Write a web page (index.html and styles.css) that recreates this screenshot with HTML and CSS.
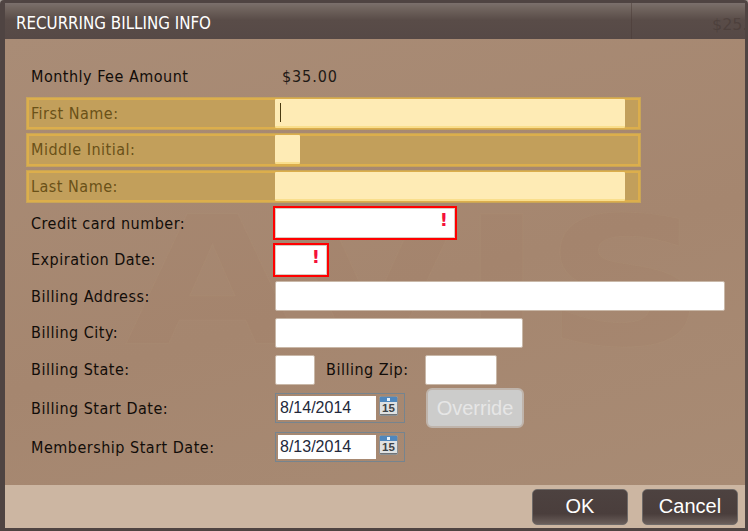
FILE: index.html
```html
<!DOCTYPE html>
<html lang="en">
<head>
<meta charset="utf-8">
<title>Recurring Billing Info</title>
<link rel="stylesheet" href="styles.css">
</head>
<body>
<div class="dialog">
  <header class="titlebar">
    <h1 class="title">RECURRING BILLING INFO</h1>
    <span class="ghost-rule"></span>
    <span class="ghost-price">$25.0</span>
  </header>
  <main class="content">
    <div class="watermark" aria-hidden="true">AVIS</div>
    <form class="form">
      <div class="row">
        <span class="label">Monthly Fee Amount</span>
        <span class="value">$35.00</span>
      </div>
      <div class="row row-warn">
        <label class="label">First Name:</label>
        <input class="input input-warn input-caret w-350" type="text">
      </div>
      <div class="row row-warn">
        <label class="label">Middle Initial:</label>
        <input class="input input-warn w-25" type="text">
      </div>
      <div class="row row-warn">
        <label class="label">Last Name:</label>
        <input class="input input-warn w-350" type="text">
      </div>
      <div class="row">
        <label class="label">Credit card number:</label>
        <span class="error-field w-184">
          <input class="input input-error" type="text">
          <span class="bang">!</span>
        </span>
      </div>
      <div class="row">
        <label class="label">Expiration Date:</label>
        <span class="error-field w-56">
          <input class="input input-error" type="text">
          <span class="bang">!</span>
        </span>
      </div>
      <div class="row">
        <label class="label">Billing Address:</label>
        <input class="input w-450" type="text">
      </div>
      <div class="row">
        <label class="label">Billing City:</label>
        <input class="input w-248" type="text">
      </div>
      <div class="row">
        <label class="label">Billing State:</label>
        <input class="input w-40" type="text">
        <label class="label-inline">Billing Zip:</label>
        <input class="input w-72" type="text">
      </div>
      <div class="row row-date">
        <label class="label">Billing Start Date:</label>
        <span class="datepicker">
          <input class="date-input" type="text" value="8/14/2014">
          <svg class="cal" width="20" height="21" viewBox="0 0 20 21">
            <rect x="0.5" y="0.5" width="18" height="19" rx="1" fill="#dfe1e2" stroke="#8b8f92"/>
            <rect x="1" y="1" width="17" height="5" fill="#4f87bd"/>
            <rect x="8" y="2" width="3" height="3" fill="#e8f2fa"/>
            <line x1="1" y1="18.5" x2="18" y2="18.5" stroke="#6f7377"/>
            <text class="cal-text" x="9.5" y="16">15</text>
          </svg>
        </span>
        <button class="override" type="button">Override</button>
      </div>
      <div class="row row-date">
        <label class="label">Membership Start Date:</label>
        <span class="datepicker">
          <input class="date-input" type="text" value="8/13/2014">
          <svg class="cal" width="20" height="21" viewBox="0 0 20 21">
            <rect x="0.5" y="0.5" width="18" height="19" rx="1" fill="#dfe1e2" stroke="#8b8f92"/>
            <rect x="1" y="1" width="17" height="5" fill="#4f87bd"/>
            <rect x="8" y="2" width="3" height="3" fill="#e8f2fa"/>
            <line x1="1" y1="18.5" x2="18" y2="18.5" stroke="#6f7377"/>
            <text class="cal-text" x="9.5" y="16">15</text>
          </svg>
        </span>
      </div>
    </form>
  </main>
  <footer class="footer">
    <button class="btn" type="button">OK</button>
    <button class="btn" type="button">Cancel</button>
  </footer>
</div>
</body>
</html>
```
FILE: styles.css
```css
* { box-sizing: border-box; }
html, body { margin: 0; padding: 0; background: #a9a29c; }
body { width: 748px; height: 531px; overflow: hidden; }

.dialog {
  width: 748px;
  height: 531px;
  display: flex;
  flex-direction: column;
  border: solid #4f4442;
  border-width: 3px 3px 3px 5px;
  border-radius: 4px 4px 0 0;
  font-family: "DejaVu Sans", sans-serif;
}

.titlebar {
  position: relative;
  height: 36px;
  flex: none;
  display: flex;
  align-items: center;
  padding: 4px 0 0 11px;
  background: linear-gradient(#7b706c 0, #71655f 5px, #594c48 17px, #564946 100%);
}
.title {
  margin: 0;
  font: 400 16.8px "DejaVu Sans Condensed", "DejaVu Sans", sans-serif;
  color: #fff;
}
.ghost-rule {
  position: absolute;
  left: 626px;
  top: 0;
  width: 1px;
  height: 43px;
  background: rgba(70, 56, 50, .45);
}
.ghost-price {
  position: absolute;
  right: 0;
  top: 12px;
  width: 33px;
  overflow: hidden;
  white-space: nowrap;
  font: 16px "DejaVu Sans", sans-serif;
  color: rgba(60, 48, 44, .4);
}

.content {
  position: relative;
  flex: 1;
  overflow: hidden;
  padding: 21px 0 0 21px;
  background: linear-gradient(165deg, #a98c76 0%, #a5866f 55%, #a88b74 100%);
}
.watermark {
  position: absolute;
  left: 120px;
  top: 155px;
  font: 700 178px/1 "DejaVu Sans", sans-serif;
  color: rgba(150, 115, 90, .07);
  -webkit-text-stroke: 1px rgba(185, 155, 130, .14);
  white-space: nowrap;
  transform: scaleX(1.27);
  transform-origin: left top;
}

.form {
  position: relative;
  width: 720px;
  display: flex;
  flex-direction: column;
  gap: 3px;
}

.row {
  height: 33.6px;
  display: flex;
  align-items: center;
  padding-left: 5px;
  flex: none;
}
.row-date { height: 34px; margin-top: 2px; }
.row-warn {
  width: 615px;
  background: #c29f5b;
  box-shadow: inset 0 0 0 1px #c9a557, inset 0 0 0 3px #dcae4c;
}

.label {
  width: 244px;
  flex: none;
  font: 16px "DejaVu Sans Condensed", "DejaVu Sans", sans-serif;
  letter-spacing: .5px;
  color: #120d09;
}
.row-warn .label { color: #6a5118; }
.label-inline {
  margin: 0 16px 0 11px;
  font: 16px "DejaVu Sans Condensed", "DejaVu Sans", sans-serif;
  letter-spacing: .5px;
  color: #120d09;
}
.value {
  margin-left: 7px;
  font: 16px "DejaVu Sans Condensed", "DejaVu Sans", sans-serif;
  letter-spacing: .9px;
  color: #1f1a16;
}

.input {
  display: block;
  height: 30px;
  padding: 0;
  background: #fff;
  border: 1px solid #c9b8a8;
  border-radius: 2px;
  outline: none;
}
.input-warn {
  height: 29px;
  background: #feebb5;
  border: 0;
  border-bottom: 2px solid #f9de8c;
  border-radius: 1px;
}
.input-caret {
  background-image: linear-gradient(#4a3a10, #4a3a10);
  background-repeat: no-repeat;
  background-size: 1px 19px;
  background-position: 5px 4px;
}
.w-25 { width: 25px; }
.w-40 { width: 40px; }
.w-72 { width: 72px; }
.w-248 { width: 248px; }
.w-350 { width: 350px; }
.w-450 { width: 450px; }
.w-184 { width: 184px; }
.w-56 { width: 56px; }

.error-field {
  position: relative;
  display: block;
  height: 34px;
  margin-left: -2px;
  flex: none;
}
.input-error {
  width: 100%;
  height: 100%;
  border: 2px solid #ff0000;
  border-radius: 0;
  box-shadow: inset 0 0 0 1px #d9cbc2;
}
.bang {
  position: absolute;
  top: 3px;
  right: 9px;
  font: 700 18px/22px "DejaVu Sans", sans-serif;
  color: #f5103a;
}

.datepicker {
  display: flex;
  align-items: center;
  gap: 3px;
  width: 130px;
  height: 30px;
  padding: 0 0 0 2px;
  border: 1px solid #76848e;
  flex: none;
}
.date-input {
  width: 98px;
  height: 24px;
  padding: 0 0 0 2px;
  border: 0;
  background: #fff;
  outline: none;
  font: 16px "Liberation Sans", sans-serif;
  color: #23283a;
}
.cal { flex: none; margin-top: -3px; }
.cal-text {
  font: 700 11.5px "Liberation Sans", sans-serif;
  fill: #3d4246;
  text-anchor: middle;
}

.override {
  width: 98px;
  height: 40px;
  margin-left: 21px;
  padding: 0;
  background: #cccccb;
  border: 2px solid #bfb4ab;
  border-radius: 6px;
  font: 20px "Liberation Sans", sans-serif;
  color: #e6e6e6;
}

.footer {
  height: 43px;
  flex: none;
  display: flex;
  justify-content: flex-end;
  align-items: center;
  gap: 14px;
  padding-right: 7px;
  background: #ccb6a2;
}
.btn {
  width: 96px;
  height: 36px;
  padding: 0;
  border: 1px solid #6f6a68;
  border-radius: 5px;
  background: linear-gradient(#4d4240 0, #4a3e3c 70%, #6a5e5a 100%);
  font: 20px "Liberation Sans", sans-serif;
  color: #fff;
}
```
